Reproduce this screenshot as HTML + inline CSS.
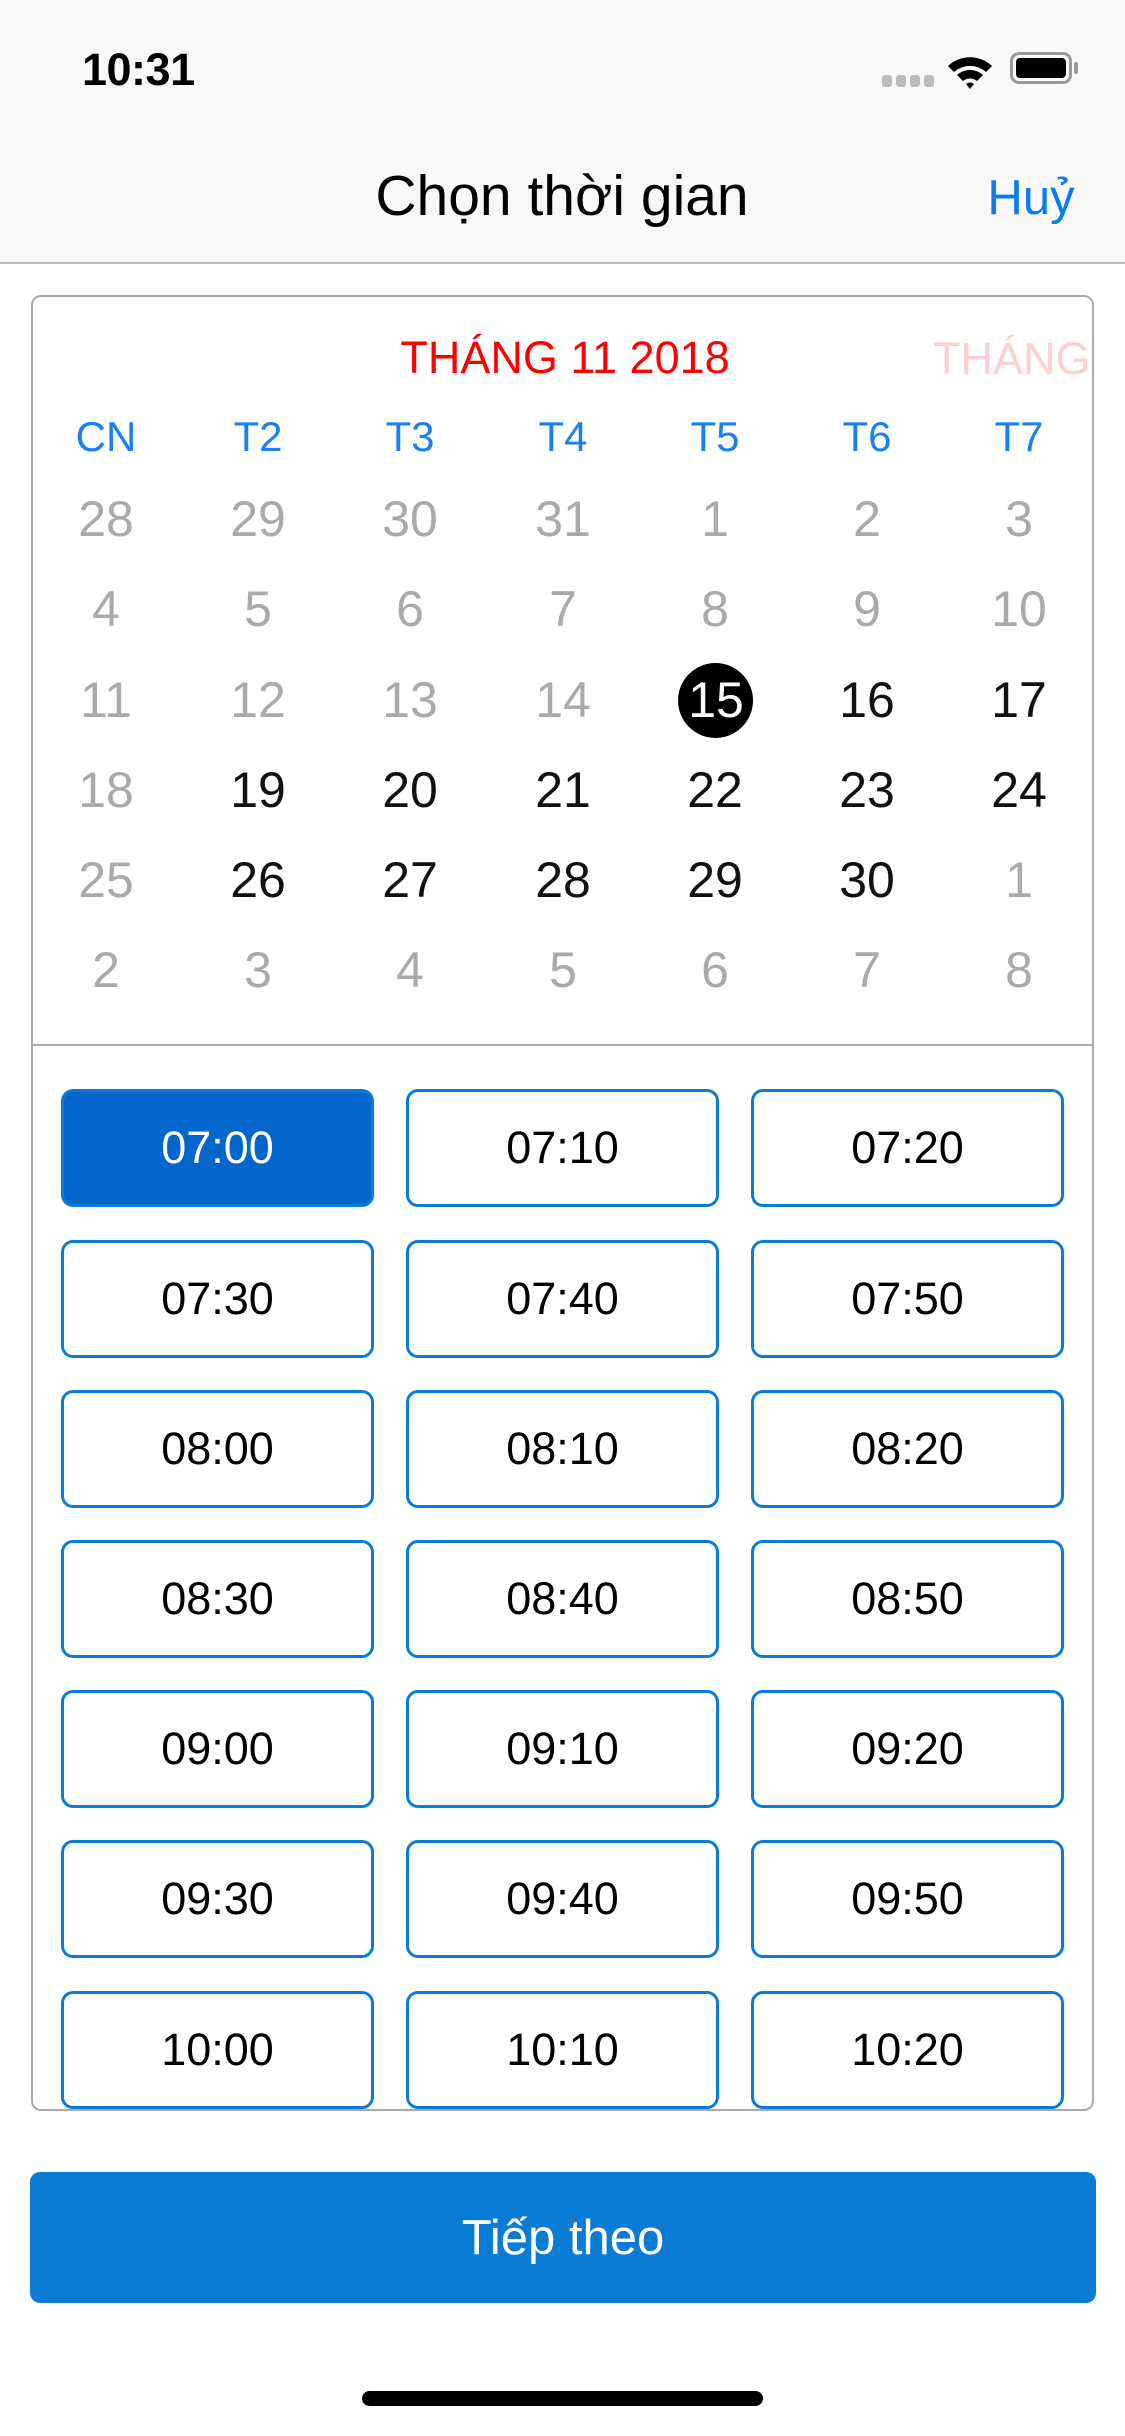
<!DOCTYPE html>
<html><head><meta charset="utf-8"><style>
*{margin:0;padding:0;box-sizing:border-box}
body{width:1125px;height:2436px;background:#fff;position:relative;overflow:hidden;font-family:"Liberation Sans",sans-serif}
.a{position:absolute}
.c{position:absolute;text-align:center;transform:translate(-50%,-50%);white-space:nowrap}
.d{font-size:50px;color:#111}
.g{color:#aaa}
.w{font-size:42px;color:#1a7ff0}
.b{position:absolute;width:313px;height:118px;border:3px solid #0a7bd6;border-radius:12px;display:flex;align-items:center;justify-content:center;font-size:45px;color:#000}
</style></head><body>
<div class="a" style="left:0;top:0;width:1125px;height:264px;background:#f8f8f8;border-bottom:2px solid #b8b8b8"></div>
<div class="a" style="left:82px;top:44px;font-size:45px;font-weight:bold;letter-spacing:-0.5px">10:31</div>
<div class="a" style="left:882px;top:75px;width:52px;height:12px;display:flex;gap:4px"><span style="width:10px;height:12px;background:#bbb;border-radius:3px"></span><span style="width:10px;height:12px;background:#bbb;border-radius:3px"></span><span style="width:10px;height:12px;background:#bbb;border-radius:3px"></span><span style="width:10px;height:12px;background:#bbb;border-radius:3px"></span></div>
<svg class="a" style="left:946px;top:52px" width="48" height="40" viewBox="0 0 48 40"><path d="M2 14 A32 32 0 0 1 46 14 L40 20 A24 24 0 0 0 8 20Z M11 23 A19 19 0 0 1 37 23 L31 29 A11 11 0 0 0 17 29Z M20 32 A6 6 0 0 1 28 32 L24 37Z" fill="#000"/></svg>
<div class="a" style="left:1010px;top:52px;width:62px;height:32px;border:3px solid #999;border-radius:9px;padding:3px"><div style="width:100%;height:100%;background:#000;border-radius:4px"></div></div>
<div class="a" style="left:1074px;top:62px;width:4px;height:12px;background:#999;border-radius:2px"></div>
<div class="c" style="left:562px;top:196px;font-size:57px;color:#000">Chọn thời gian</div>
<div class="c" style="left:1031px;top:198px;font-size:49px;color:#0a7cf0">Huỷ</div>
<div class="a" style="left:31px;top:295px;width:1063px;height:1816px;border:2px solid #aaa;border-radius:10px;overflow:hidden">
<div class="c" style="left:532px;top:61px;font-size:45px;color:#f00">THÁNG 11 2018</div>
<div class="a" style="left:900px;top:36px;font-size:45px;color:#fcd0d0;white-space:nowrap">THÁNG 12 2018</div>
<div class="a" style="left:0;top:747px;width:100%;height:2px;background:#aaa"></div>
</div>
<div class="a" style="left:0;top:0">
<div class="c w" style="left:106px;top:437px">CN</div><div class="c w" style="left:258px;top:437px">T2</div><div class="c w" style="left:410px;top:437px">T3</div><div class="c w" style="left:563px;top:437px">T4</div><div class="c w" style="left:715px;top:437px">T5</div><div class="c w" style="left:867px;top:437px">T6</div><div class="c w" style="left:1019px;top:437px">T7</div>
<div class="c d g" style="left:106px;top:519px">28</div><div class="c d g" style="left:258px;top:519px">29</div><div class="c d g" style="left:410px;top:519px">30</div><div class="c d g" style="left:563px;top:519px">31</div><div class="c d g" style="left:715px;top:519px">1</div><div class="c d g" style="left:867px;top:519px">2</div><div class="c d g" style="left:1019px;top:519px">3</div>
<div class="c d g" style="left:106px;top:609px">4</div><div class="c d g" style="left:258px;top:609px">5</div><div class="c d g" style="left:410px;top:609px">6</div><div class="c d g" style="left:563px;top:609px">7</div><div class="c d g" style="left:715px;top:609px">8</div><div class="c d g" style="left:867px;top:609px">9</div><div class="c d g" style="left:1019px;top:609px">10</div>
<div class="c d g" style="left:106px;top:700px">11</div><div class="c d g" style="left:258px;top:700px">12</div><div class="c d g" style="left:410px;top:700px">13</div><div class="c d g" style="left:563px;top:700px">14</div>
<div class="a" style="left:678px;top:663px;width:75px;height:75px;border-radius:50%;background:#000"></div>
<div class="c d" style="left:716px;top:700px;color:#fff">15</div><div class="c d" style="left:867px;top:700px">16</div><div class="c d" style="left:1019px;top:700px">17</div>
<div class="c d g" style="left:106px;top:790px">18</div><div class="c d" style="left:258px;top:790px">19</div><div class="c d" style="left:410px;top:790px">20</div><div class="c d" style="left:563px;top:790px">21</div><div class="c d" style="left:715px;top:790px">22</div><div class="c d" style="left:867px;top:790px">23</div><div class="c d" style="left:1019px;top:790px">24</div>
<div class="c d g" style="left:106px;top:880px">25</div><div class="c d" style="left:258px;top:880px">26</div><div class="c d" style="left:410px;top:880px">27</div><div class="c d" style="left:563px;top:880px">28</div><div class="c d" style="left:715px;top:880px">29</div><div class="c d" style="left:867px;top:880px">30</div><div class="c d g" style="left:1019px;top:880px">1</div>
<div class="c d g" style="left:106px;top:970px">2</div><div class="c d g" style="left:258px;top:970px">3</div><div class="c d g" style="left:410px;top:970px">4</div><div class="c d g" style="left:563px;top:970px">5</div><div class="c d g" style="left:715px;top:970px">6</div><div class="c d g" style="left:867px;top:970px">7</div><div class="c d g" style="left:1019px;top:970px">8</div>
</div>
<div class="a" style="left:33px;top:1046px;width:1059px;height:1063px;overflow:hidden">
<div class="b" style="left:28px;top:43px;background:#0366cc;color:#fff">07:00</div><div class="b" style="left:373px;top:43px">07:10</div><div class="b" style="left:718px;top:43px">07:20</div>
<div class="b" style="left:28px;top:194px">07:30</div><div class="b" style="left:373px;top:194px">07:40</div><div class="b" style="left:718px;top:194px">07:50</div>
<div class="b" style="left:28px;top:344px">08:00</div><div class="b" style="left:373px;top:344px">08:10</div><div class="b" style="left:718px;top:344px">08:20</div>
<div class="b" style="left:28px;top:494px">08:30</div><div class="b" style="left:373px;top:494px">08:40</div><div class="b" style="left:718px;top:494px">08:50</div>
<div class="b" style="left:28px;top:644px">09:00</div><div class="b" style="left:373px;top:644px">09:10</div><div class="b" style="left:718px;top:644px">09:20</div>
<div class="b" style="left:28px;top:794px">09:30</div><div class="b" style="left:373px;top:794px">09:40</div><div class="b" style="left:718px;top:794px">09:50</div>
<div class="b" style="left:28px;top:945px">10:00</div><div class="b" style="left:373px;top:945px">10:10</div><div class="b" style="left:718px;top:945px">10:20</div>
</div>
<div class="a" style="left:30px;top:2172px;width:1066px;height:131px;background:#0a7cd6;border-radius:10px;color:#fff;font-size:49px;display:flex;align-items:center;justify-content:center">Tiếp theo</div>
<div class="a" style="left:362px;top:2391px;width:401px;height:15px;background:#000;border-radius:8px"></div>
</body></html>
